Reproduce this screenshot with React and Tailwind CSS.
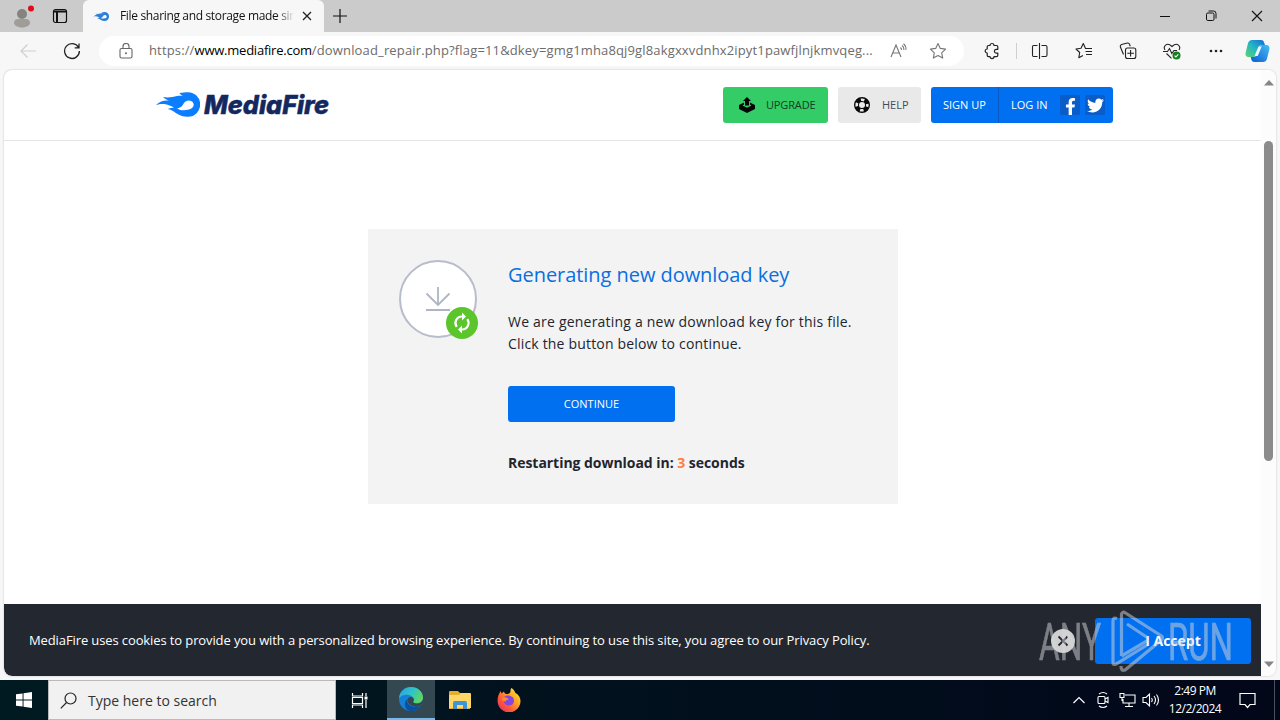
import { FaFacebookF, FaTwitter } from "react-icons/fa";

const iconBtn = "flex h-full w-11 shrink-0 items-center justify-center";

function Flame({ className, fill }) {
  return (
    <svg viewBox="0 0 44 25" className={className} fill={fill}>
      <path fillRule="evenodd" d="M0 13C4 9 8 8 13 8.500C10 7.500 8.500 6.500 7 5C12 6 17 5 21 4C23 3.500 25 3.500 27 4C25 3 24 2 23.500 1C27 1 29 0.300 32 0.300A12.200 12.200 0 0 1 32 24.700C25 25 21 21.500 16 18.500C14.500 17.500 13 17 11.500 17C14 16 16 16 18 15.200C14 14 12 12.200 8 12C5 11.700 2.500 12.300 0 13ZM21 16.500C25 19 29 18.500 33 17.500C38 16.500 39 12 36 9.500C33 7.500 29.500 8.500 28 11C26.500 14 24.500 16 21 16.500Z" />
    </svg>
  );
}

function TabBar() {
  return (
    <div className="flex h-8 items-center bg-[#cbcbcb]">
      <div className="flex w-11 justify-center">
        <svg width="24" height="28" viewBox="0 0 24 28">
          <circle cx="12" cy="12" r="5" fill="#858380" />
          <path d="M4 21c0-3 2-4 4-4h8c2 0 4 1 4 4 0 2-3 4.500-8 4.500S4 23 4 21z" fill="#a09d99" />
          <circle cx="21" cy="6.500" r="3" fill="#e00b1c" />
        </svg>
      </div>
      <div className="flex w-8 justify-center">
        <svg width="16" height="16" viewBox="0 0 16 16" fill="none" stroke="#111" strokeWidth="1.2">
          <rect x="1.500" y="1.500" width="13" height="13" rx="2" />
          <path d="M2 3.500h12M5 4v10" strokeWidth="2" />
        </svg>
      </div>
      <div className="ml-[7px] flex h-8 w-[241px] items-center rounded-t-md bg-[#f7f7f7] pl-2.5">
        <Flame className="h-[13px] w-4" fill="#2f7fd8" />
        <div className="ml-[11px] w-[173px] overflow-hidden whitespace-nowrap bg-linear-to-r from-[#111] from-90% to-[#e4e4e4] bg-clip-text text-[12px] tracking-[-0.340px] text-transparent">
          File sharing and storage made sir
        </div>
        <svg className="ml-[9px]" width="10" height="10" viewBox="0 0 10 10" stroke="#222" strokeWidth="1.3">
          <path d="M1 1l8 8M9 1L1 9" />
        </svg>
      </div>
      <svg className="ml-[9px]" width="14" height="14" viewBox="0 0 14 14" stroke="#111" strokeWidth="1.200">
        <path d="M7 0v14M0 7h14" />
      </svg>
      <div className="ml-auto flex">
        <div className="flex h-8 w-[46px] items-center justify-center">
          <div className="h-px w-[10px] bg-[#111]" />
        </div>
        <div className="flex h-8 w-[46px] items-center justify-center">
          <svg width="12" height="12" viewBox="0 0 12 12" fill="none" stroke="#111">
            <rect x="1.500" y="3" width="7.500" height="7.500" rx="1.300" />
            <path d="M3.500 1h5A2.500 2.500 0 0 1 11 3.500v5" />
          </svg>
        </div>
        <div className="flex h-8 w-[46px] items-center justify-center">
          <svg width="12" height="12" viewBox="0 0 12 12" stroke="#111" strokeWidth="1.100">
            <path d="M1 1l10 10M11 1L1 11" />
          </svg>
        </div>
      </div>
    </div>
  );
}

function Toolbar() {
  return (
    <div className="flex h-[37px] items-center bg-[#f7f7f7]">
      <div className="flex w-14 justify-center">
        <svg width="18" height="16" viewBox="0 0 18 16" fill="none" stroke="#cfcfcf" strokeWidth="1.200">
          <path d="M17 8H2M8.500 1.500L2 8l6.500 6.500" />
        </svg>
      </div>
      <div className="flex w-8 justify-center">
        <svg width="18" height="18" viewBox="0 0 18 18" fill="none" stroke="#222" strokeWidth="1.300">
          <path d="M15.500 5.500A7.400 7.400 0 1 0 16.400 9M16 1.500v4.300h-4.300" />
        </svg>
      </div>
      <div className="ml-[11px] flex h-[30px] w-[865px] items-center rounded-full bg-white pl-5">
        <svg width="14" height="16" viewBox="0 0 14 16" fill="none" stroke="#666" strokeWidth="1.100">
          <rect x="1" y="5.500" width="12" height="9.500" rx="1.500" />
          <path d="M4 5.500V3.500a3 3 0 0 1 6 0v2" />
          <circle cx="7" cy="10.300" r="1" fill="#666" stroke="none" />
        </svg>
        <div className="ml-4 w-[732px] pt-px whitespace-nowrap text-[13px] tracking-[0.150px] text-[#6c6c6c]">
          https://<span className="tracking-[-0.230px] text-black">www.mediafire.com</span>/download_repair.php?flag=11&amp;dkey=gmg1mha8qj9gl8akgxxvdnhx2ipyt1pawfjlnjkmvqeg...
        </div>
        <svg className="ml-[9px]" width="18" height="16" viewBox="0 0 18 16" fill="none" stroke="#777" strokeWidth="1.100">
          <path d="M1 14L6 2l5 12M2.800 10h6.400M10.500 4.500c.8.700 1 1.500 1 2.500M12 2.500c1.500 1 2 2.500 2 4.500M13.500.8c2 1.500 2.600 3.500 2.500 6" />
        </svg>
        <svg className="ml-[21px]" width="18" height="18" viewBox="0 0 18 18" fill="none" stroke="#777" strokeWidth="1.100" strokeLinejoin="round">
          <path d="M9 1.500l2.300 4.900 5.300.7-3.900 3.700 1 5.300L9 13.500l-4.700 2.600 1-5.300L1.400 7.100l5.300-.7z" />
        </svg>
      </div>
      <div className="ml-1.5 flex w-11 justify-center">
        <svg width="18" height="18" viewBox="0 0 18 18" fill="none" stroke="#222" strokeWidth="1.200" strokeLinejoin="round">
          <path d="M5.500 3.500H7a2 2 0 0 1 4 0h2.500q1.300 0 1.300 1.300v2.500h-1.500a1.900 1.900 0 0 0 0 3.800h1.500v2.200q0 1.300-1.300 1.300H11a2 2 0 0 1-4 0H5.500q-1.300 0-1.300-1.300V11a2 2 0 0 1 0-4V4.800q0-1.300 1.300-1.300z" />
        </svg>
      </div>
      <div className="ml-[2px] h-4 w-px bg-[#cfcfcf]" />
      <div className="ml-px flex h-full">
        <div className={iconBtn}>
          <svg width="18" height="18" viewBox="0 0 18 18" fill="none" stroke="#222" strokeWidth="1.100">
            <path d="M8.500 1v16M6.500 3.500h-4Q1.500 3.500 1.500 5v8q0 1.500 1 1.500h4M10.500 3.500h4q1.500 0 1.500 1.500v8q0 1.500-1.500 1.500h-4" />
          </svg>
        </div>
        <div className={iconBtn}>
          <svg width="18" height="18" viewBox="0 0 18 18" fill="none" stroke="#222" strokeWidth="1.100" strokeLinejoin="round">
            <path d="M13 6.500h-2.500L8.300 1.500 6 6.200l-5 .8 3.700 3.500-.9 5.200 4.200-2.200M12 6.500h5M10.500 9.500H17M11 12.500h6" />
          </svg>
        </div>
        <div className={iconBtn}>
          <svg width="18" height="18" viewBox="0 0 18 18" fill="none" stroke="#222" strokeWidth="1.100">
            <rect x="6.500" y="6" width="10.300" height="10.500" rx="2" />
            <path d="M11.600 8v6.500M8.300 11.200H15M4.500 12.500L1.300 4.800A2 2 0 0 1 2.500 2.500L8.500 1a1.800 1.800 0 0 1 2 1.200l.8 2" />
          </svg>
        </div>
        <div className={iconBtn}>
          <svg width="18" height="18" viewBox="0 0 18 18" fill="none" stroke="#222" strokeWidth="1.100">
            <path d="M2 8C-.2 4.500 3.500-.5 9 4.500 14.500-.5 18.200 4.500 16 8M0 9.500h4.500l2-3 2.300 5 2.200-3h3M3.500 11.500l5 4.800" />
            <circle cx="13.500" cy="13.500" r="4" fill="#13801f" stroke="none" />
            <path d="M11.600 13.700l1.300 1.300 2.400-2.700" stroke="#fff" />
          </svg>
        </div>
        <div className={iconBtn}>
          <svg width="14" height="4" viewBox="0 0 14 4" fill="#222">
            <circle cx="2" cy="2" r="1.300" />
            <circle cx="7" cy="2" r="1.300" />
            <circle cx="12" cy="2" r="1.300" />
          </svg>
        </div>
      </div>
      <svg className="ml-[7px]" width="25" height="24" viewBox="0 0 25 24">
        <defs>
          <linearGradient id="cop1" x1="0" y1="1" x2="1" y2="0">
            <stop offset="0" stopColor="#5bd56b" />
            <stop offset=".5" stopColor="#24b6c4" />
            <stop offset="1" stopColor="#1469d8" />
          </linearGradient>
          <linearGradient id="cop2" x1="0" y1="1" x2="1" y2="0">
            <stop offset="0" stopColor="#0b5cd0" />
            <stop offset="1" stopColor="#46bdf5" />
          </linearGradient>
        </defs>
        <path d="M7 1h9c2 0 2.700 1 3.300 3l.7 2h-3c-2 0-3 1-3.600 3l-2 6c-.7 2-1.500 3-3.500 3H4c-3 0-4-2-3.200-5l2-8C3.500 2 5 1 7 1z" fill="url(#cop1)" />
        <path d="M18 23H9.500c-2 0-2.800-1-3.300-3l-.5-2h2.500c2 0 3-1 3.600-3l2-6c.7-2 1.500-3 3.500-3H21c3 0 4 2 3.200 5l-2 8c-.7 3-2.200 4-4.200 4z" fill="url(#cop2)" />
        <path d="M13.500 7.500h3.200l-4 9.500H9.500z" fill="#eaf8ff" />
      </svg>
    </div>
  );
}

function SiteHeader() {
  return (
    <header className="flex h-[71px] items-center border-b border-[#e4e5e8] pl-[152px]">
      <Flame className="-mt-px h-[25px] w-11" fill="#0b7dff" />
      <svg width="134" height="32" viewBox="0 0 134 32" className="ml-[2px]">
        <text x="2" y="25" textLength="125" lengthAdjust="spacingAndGlyphs" fontFamily="Inter, sans-serif" fontWeight="800" fontStyle="italic" fontSize="26" fill="#13285f" stroke="#13285f" strokeWidth=".5">MediaFire</text>
      </svg>
      <div className="ml-[387px] flex h-9 w-[105px] items-center rounded-[3px] bg-[#34cc66] pl-4 text-[11px] text-[#123d25]">
        <svg width="16" height="16" viewBox="0 0 16 16" fill="#050505">
          <path d="M0 8l5-2.400v2L3.500 8.400 8 10.700l4.500-2.300L11 7.600v-2L16 8v4l-8 4-8-4z" />
          <path d="M8 0l4 4h-2v4.500H6V4H4z" />
        </svg>
        <span className="ml-[11px] tracking-[-0.150px]">UPGRADE</span>
      </div>
      <div className="ml-2.5 flex h-9 w-[83px] items-center rounded-[3px] bg-[#e9e9e9] pl-4 text-[11px] text-[#444b58]">
        <svg width="16" height="16" viewBox="0 0 16 16" fill="none">
          <circle cx="8" cy="8" r="5.500" stroke="#080808" strokeWidth="5" />
          <circle cx="8" cy="8" r="5.300" stroke="#e9e9e9" strokeWidth="2.600" strokeDasharray="3.600 4.725" strokeDashoffset="1.800" />
        </svg>
        <span className="ml-3">HELP</span>
      </div>
      <div className="ml-2.5 flex h-9 w-[182px] items-center overflow-hidden rounded-[3px] bg-[#0070f0] text-[11px] text-white">
        <div className="flex h-full w-[68px] items-center border-r border-[#0a58c4] pl-3">SIGN UP</div>
        <div className="flex items-center pl-3">
          <span className="w-[49px]">LOG IN</span>
          <span className="flex size-5 items-end justify-center rounded-xs bg-[#0a5cc8]"><FaFacebookF className="size-[17px]" /></span>
          <span className="ml-[5px] flex size-5 items-center justify-center rounded-xs bg-[#0a5cc8]"><FaTwitter className="size-[17px]" /></span>
        </div>
      </div>
    </header>
  );
}

function DownloadCard() {
  return (
    <div className="ml-[364px] mt-[88px] flex h-[275px] w-[530px] bg-[#f3f3f3] pl-[30px]">
      <svg width="82" height="82" viewBox="0 0 82 82" fill="none" className="mt-[30px]">
        <circle cx="40" cy="40" r="38" fill="#fff" stroke="#b8bccb" strokeWidth="2" />
        <path d="M40 28v18M28.500 34.500L40 46l11.500-11.500M28 51h24" stroke="#b0b5c5" strokeWidth="1.800" />
        <circle cx="64" cy="64" r="16" fill="#5cc52b" />
        <path d="M64 57.500a6.500 6.500 0 0 0-5.300 10.300M64 70.500a6.500 6.500 0 0 0 5.300-10.300" stroke="#fff" strokeWidth="2.200" />
        <path d="M64 53.500l4 4-4 4zM64 66.500l-4 4 4 4z" fill="#fff" />
      </svg>
      <div className="pl-7 text-[#22252e]">
        <h1 className="mt-[32px] text-[20px] leading-7 tracking-[-0.050px] whitespace-nowrap text-[#0a6fe0]">Generating new download key</h1>
        <p className="mt-[22px] text-[14px] leading-[22px] tracking-[0.210px] whitespace-nowrap">
          We are generating a new download key for this file.
          <br />
          <span className="tracking-[0.180px]">Click the button below to continue.</span>
        </p>
        <button className="mt-[31px] block h-9 w-[167px] rounded-[3px] bg-[#0070f0] text-[11px] text-white">CONTINUE</button>
        <p className="mt-[30px] text-[14px] leading-[22px] font-bold tracking-[-0.040px] whitespace-nowrap">
          Restarting download in: <span className="text-[#ff7f41]">3</span> seconds
        </p>
      </div>
    </div>
  );
}

function CookieBar() {
  return (
    <div className="flex h-[72px] items-center rounded-bl-lg bg-[#23272f] pt-[2px] pl-[25px] text-white">
      <p className="w-[1022px] text-[13px] tracking-[-0.110px] whitespace-nowrap">
        MediaFire uses cookies to provide you with a personalized browsing experience. By continuing to use this site, you agree to our Privacy Policy.
      </p>
      <svg width="24" height="24" viewBox="0 0 24 24">
        <circle cx="12" cy="12" r="12" fill="#cfcfcf" />
        <path d="M7.500 7.500l9 9M16.500 7.500l-9 9" stroke="#23272f" strokeWidth="1.800" />
      </svg>
      <button className="ml-5 h-[46px] w-[156px] rounded-[3px] bg-[#0070f0] pb-0.5 text-[14px] font-bold">I Accept</button>
    </div>
  );
}

function Watermark() {
  return (
    <svg className="absolute top-[605px] left-[1034px] opacity-50" width="204" height="70" viewBox="0 0 204 70" fill="none" stroke="#d5d7da">
      <text x="5" y="54.500" textLength="62" lengthAdjust="spacingAndGlyphs" fontFamily="Roboto, sans-serif" fontWeight="400" fontSize="52" fill="#d5d7da" strokeWidth=".7">ANY</text>
      <text x="134" y="54.500" textLength="65" lengthAdjust="spacingAndGlyphs" fontFamily="Roboto, sans-serif" fontWeight="400" fontSize="52" fill="#d5d7da" strokeWidth=".7">RUN</text>
      <path d="M83 13.500q-4-1.500-4 2v42q0 3 3 1.500L113 40M93 19l21 14M87.500 51V9q1-3 4-1l36 23q2 2 0 4L91 65q-4 1.500-4-4M87.500 51l27-16" strokeWidth="3.200" />
    </svg>
  );
}

function Taskbar() {
  return (
    <div className="flex h-10 items-center bg-linear-to-r from-[#001a21] to-[#020719] text-white">
      <div className="flex w-12 justify-center">
        <svg width="16" height="16" viewBox="0 0 17 17" fill="#fff">
          <path d="M0 2.500l7-1V8H0zM8 1.300L17 0v8H8zM0 9h7v6.500l-7-1zM8 9h9v8l-9-1.300z" />
        </svg>
      </div>
      <div className="flex h-full w-72 items-center border border-[#b9b9b9] bg-[#f1f1f1] pl-[11px] text-[#333]">
        <svg width="17" height="17" viewBox="0 0 17 17" fill="none" stroke="#222" strokeWidth="1.200">
          <circle cx="10.500" cy="6.500" r="5.500" />
          <path d="M6.500 10.500L.8 16.300" />
        </svg>
        <span className="ml-[11px] text-[14px]">Type here to search</span>
      </div>
      <div className="flex w-[51px] justify-center pr-1">
        <svg width="17" height="17" viewBox="0 0 17 17" fill="none" stroke="#fff" strokeWidth="1.200">
          <path d="M1.500 1v3h10V1M1.500 16v-3h10v3M1.500 5.500h10v6h-10zM15 1v3M15 8v8" />
          <path d="M13.500 4.500h3v3h-3z" fill="#fff" stroke="none" />
        </svg>
      </div>
      <div className="flex h-full w-12 items-center justify-center border-b-2 border-[#76b9ed] bg-[#334850]">
        <svg width="24" height="24" viewBox="0 0 24 24">
          <defs>
            <linearGradient id="edgeTop" x1="0" y1=".2" x2="1" y2=".6">
              <stop offset="0" stopColor="#2aa5dd" />
              <stop offset=".5" stopColor="#2fc3cb" />
              <stop offset="1" stopColor="#61d957" />
            </linearGradient>
          </defs>
          <circle cx="12" cy="12" r="12" fill="#1680d6" />
          <path d="M0 11C.6 4.700 5.600 0 12 0c7 0 12 5 12 10.500 0 3.500-2.700 6-6.200 6-3.300 0-4.300-1.300-3.800-2 1.200-1.500.8-4-1.200-5.300C9 6.500 3 7.500 0 11z" fill="url(#edgeTop)" />
          <path d="M8.500 12c-1.500 5 3.500 9.800 13.300 7C19 23 14.500 24.500 10 23.800 5 21.500 4.500 14.500 8.500 12z" fill="#0b4f9f" />
          <path d="M14.500 14.200c-.8 1 .3 2.300 3.300 2.300 3 0 5-1.500 6-4V16l-2.200 3C15 21 9 18 8.500 13.500c0-2 1.500-3.500 3.300-3.500 2 0 4 2 2.700 4.200z" fill="#334850" />
        </svg>
      </div>
      <div className="flex w-[49px] justify-center">
        <svg width="22" height="20" viewBox="0 0 22 20">
          <path d="M0 2q0-1 1-1h8l2 2h10v16H0z" fill="#e9ac2c" />
          <path d="M0 5h10l2-2h9q1 0 1 1v14H0z" fill="#ffd766" />
          <path d="M4 19v-6q0-2 2-2h10q2 0 2 2v6h-4v-4H8v4z" fill="#3d94d6" />
        </svg>
      </div>
      <div className="flex w-[49px] justify-center">
        <svg width="24" height="24" viewBox="0 0 24 24">
          <defs>
            <linearGradient id="fox" x1="1" y1="0" x2="0" y2="1">
              <stop offset="0" stopColor="#fff04d" />
              <stop offset=".35" stopColor="#ffac24" />
              <stop offset=".65" stopColor="#ff5b36" />
              <stop offset="1" stopColor="#e32274" />
            </linearGradient>
          </defs>
          <path d="M14.500 0c2 1.300 3.300 3 3.700 4.700C21.500 6.500 23.500 9.500 23.500 13a11.400 11.400 0 0 1-22.900 0C.5 9 1.500 6 3.800 3l.7 2.500L7 3.500c.3 1.500 1 2.200 2.500 2.500 2.500 0 4-1 4-3 0-1.300.3-2.200 1-3z" fill="url(#fox)" />
          <path d="M7 9c2-2 6-2.500 9 .5 2 3 1 7.500-3.500 8C8.500 17.500 6.500 15 7 12.500l4-1.500c-1-1.200-2.500-1.500-4-2z" fill="#8447dc" />
          <path d="M5 11c2-2 5-1.500 7 .5-2 .2-3 .8-3.500 2C6.500 13.500 5 12.500 5 11z" fill="#ff8a2c" />
        </svg>
      </div>
      <div className="ml-auto flex items-center">
        <div className="flex w-6 justify-center">
          <svg width="12" height="8" viewBox="0 0 12 8" fill="none" stroke="#fff" strokeWidth="1.200"><path d="M.5 7L6 1.500 11.500 7" /></svg>
        </div>
        <div className="flex w-6 justify-center">
          <svg width="14" height="18" viewBox="0 0 14 18" fill="none" stroke="#fff" strokeWidth="1.100">
            <rect x="2" y="5.500" width="7" height="7" rx="1" />
            <path d="M9 8l3-1.500v5L9 10M3 3q4-3 8 0M3 15q4 3 8 0" />
          </svg>
        </div>
        <div className="flex w-6 justify-center">
          <svg width="17" height="16" viewBox="0 0 17 16" fill="none" stroke="#fff" strokeWidth="1.100">
            <path d="M6 3h10v8H4V7M10 11v3M6 14.500h8M1 1.500h4v4H1zM3 5.500V9" />
          </svg>
        </div>
        <div className="flex w-6 justify-center">
          <svg width="18" height="16" viewBox="0 0 18 16" fill="none" stroke="#fff" strokeWidth="1.100">
            <path d="M1 5.500h3L7.500 2v12L4 10.500H1zM9.500 6q1.500 2 0 4M12 4q3 4 0 8M14.500 2.500q4 5.500 0 11" />
          </svg>
        </div>
        <div className="flex w-16 flex-col items-center text-[12px] leading-[18px] tracking-[-0.500px]">
          <span>2:49 PM</span>
          <span>12/2/2024</span>
        </div>
        <div className="flex w-10 justify-center">
          <svg width="17" height="17" viewBox="0 0 17 17" fill="none" stroke="#fff" strokeWidth="1.200">
            <path d="M1 1.500h15v11h-5L8.500 15.500 6 12.500H1z" />
          </svg>
        </div>
        <div className="ml-[7px] h-10 w-px bg-[#4b505c]" />
        <div className="w-[5px]" />
      </div>
    </div>
  );
}

function App() {
  return (
    <div className="relative flex h-[720px] w-[1280px] flex-col overflow-hidden bg-[#f7f7f7] font-['Open_Sans',sans-serif]">
      <TabBar />
      <Toolbar />
      <div className="mx-1 mt-px mb-1 flex h-[606px] overflow-hidden rounded-lg bg-white shadow-[0_0_2px_#bbb]">
        <div className="flex w-[1257px] flex-col">
          <SiteHeader />
          <DownloadCard />
          <div className="mt-auto">
            <CookieBar />
          </div>
        </div>
        <div className="flex w-[15px] flex-col items-center bg-[#fcfcfc] pt-[10px] pb-[9px]">
          <svg width="10" height="6" viewBox="0 0 10 6" fill="#858585"><path d="M5 0l5 5.500H0z" /></svg>
          <div className="mt-[55px] h-80 w-[9px] rounded-full bg-[#8b8b8b]" />
          <svg className="mt-auto" width="10" height="6" viewBox="0 0 10 6" fill="#858585"><path d="M0 .5h10L5 6z" /></svg>
        </div>
      </div>
      <Taskbar />
      <Watermark />
    </div>
  );
}

export default App;
